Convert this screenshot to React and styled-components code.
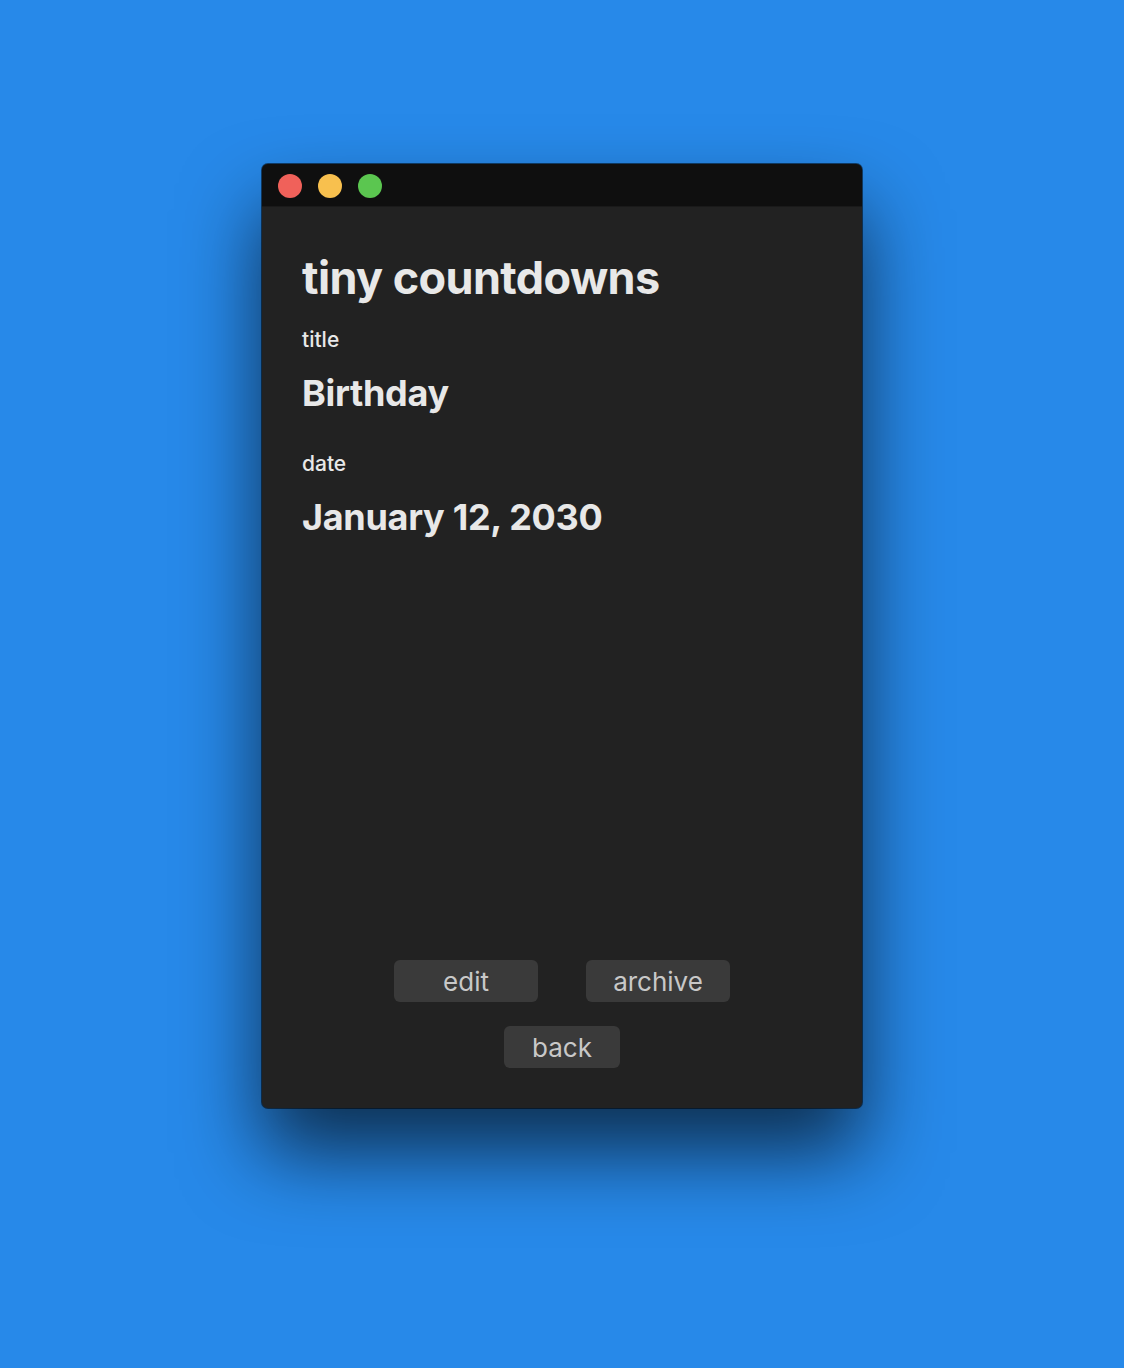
import React from "react";
import styled, { createGlobalStyle } from "styled-components";

const Global = createGlobalStyle`
  html, body { margin: 0; padding: 0; }
  body {
    background: #2789e9;
    font-family: Inter, "Noto Sans", "Liberation Sans", sans-serif;
    -webkit-font-smoothing: antialiased;
  }
`;

const Page = styled.div`
  min-height: 1368px;
  display: flex;
  justify-content: center;
  align-items: flex-start;
  padding-top: 164px;
  box-sizing: border-box;
`;

const Window = styled.div`
  width: 600px;
  height: 944px;
  border-radius: 6px;
  background: #222222;
  box-shadow: 0 0 0 1px rgba(0, 0, 0, 0.55), 0 45px 80px rgba(0, 0, 0, 0.65);
  display: flex;
  flex-direction: column;
  overflow: hidden;
`;

const TitleBar = styled.div`
  height: 43px;
  flex: none;
  background: #0f0f0f;
  border-bottom: 1px solid #1a1a1a;
  box-sizing: border-box;
  display: flex;
  align-items: center;
  gap: 16px;
  padding: 1px 0 0 16px;
`;

const Light = styled.span`
  width: 24px;
  height: 24px;
  border-radius: 50%;
  background: ${(p) => p.$color};
`;

const Content = styled.div`
  flex: 1;
  display: flex;
  flex-direction: column;
  padding: 43px 40px 40px;
`;

const Heading = styled.h1`
  margin: 0;
  font-size: 45px;
  font-weight: 700;
  color: #e8e8e8;
  line-height: 56px;
  letter-spacing: -0.6px;
`;

const Label = styled.div`
  margin-top: ${(p) => p.$top}px;
  font-size: 21px;
  font-weight: 500;
  color: #e8e8e8;
  line-height: 24px;
`;

const Value = styled.div`
  margin-top: 19px;
  font-size: 36px;
  font-weight: 700;
  color: #e8e8e8;
  line-height: 44px;
  letter-spacing: -0.3px;
`;

const Spacer = styled.div`
  flex: 1;
`;

const Actions = styled.div`
  display: flex;
  flex-direction: column;
  align-items: center;
  gap: 24px;
`;

const Row = styled.div`
  display: flex;
  justify-content: center;
  gap: 48px;
`;

const Button = styled.button`
  width: ${(p) => p.$w}px;
  height: 42px;
  border: none;
  border-radius: 6px;
  background: #3a3a3a;
  color: #c8c8c8;
  font-family: Inter, "Noto Sans", sans-serif;
  font-size: 26px;
  font-weight: 400;
  padding: 0;
  cursor: pointer;
`;

export default function App() {
  return (
    <>
      <Global />
      <Page>
        <Window>
          <TitleBar>
            <Light $color="#f0615a" />
            <Light $color="#f8c04e" />
            <Light $color="#5bc650" />
          </TitleBar>
          <Content>
            <Heading>tiny countdowns</Heading>
            <Label $top={22}>title</Label>
            <Value>Birthday</Value>
            <Label $top={37}>date</Label>
            <Value>January 12, 2030</Value>
            <Spacer />
            <Actions>
              <Row>
                <Button $w={144}>edit</Button>
                <Button $w={144}>archive</Button>
              </Row>
              <Button $w={116}>back</Button>
            </Actions>
          </Content>
        </Window>
      </Page>
    </>
  );
}
